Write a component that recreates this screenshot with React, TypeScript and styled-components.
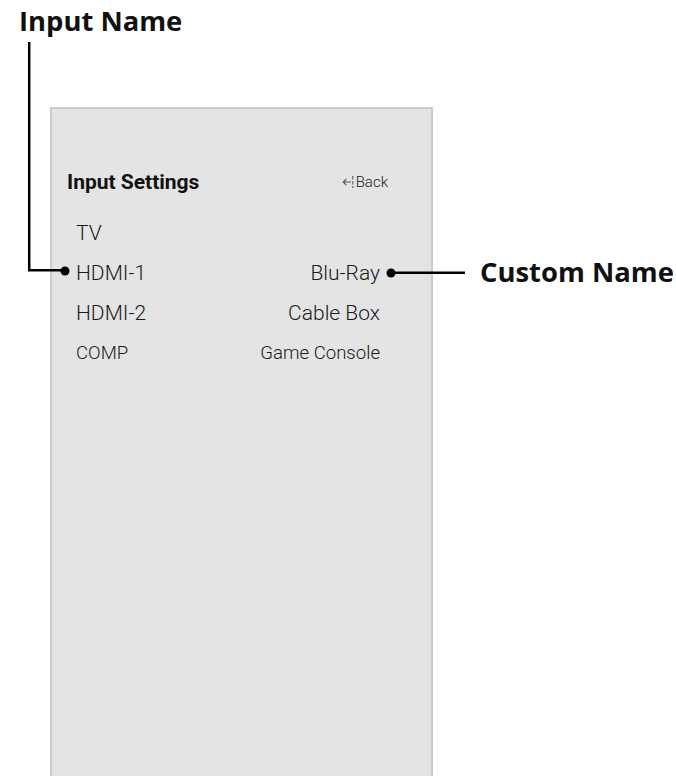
import React from "react";
import styled, { createGlobalStyle } from "styled-components";

const GlobalStyle = createGlobalStyle`
  html, body {
    margin: 0;
    padding: 0;
    background: #ffffff;
    overflow: hidden;
  }
`;

const Page = styled.div`
  padding-top: 2.5px;
  width: 676px;
  height: 776px;
  box-sizing: border-box;
  overflow: hidden;
`;

const Label = styled.h2`
  margin: 0 0 0 19px;
  font-family: "Open Sans", "Liberation Sans", sans-serif;
  font-weight: 700;
  font-size: 27.4px;
  line-height: 36px;
  color: #111;
  white-space: nowrap;
`;

const Panel = styled.div`
  margin: 68.5px 0 0 50px;
  width: 383px;
  height: 669px;
  box-sizing: border-box;
  border: 2px solid #cbcbcb;
  border-bottom: none;
  background: #e4e4e4;
  padding-top: 61px;
  font-family: Roboto, "Liberation Sans", sans-serif;
`;

const TitleRow = styled.div`
  display: flex;
  align-items: baseline;
  justify-content: space-between;
  padding: 0 43px 0 15px;
  margin-bottom: 18.7px;
`;

const Title = styled.span`
  font-weight: 700;
  font-size: 21px;
  line-height: 24px;
  color: #111;
`;

const BackLink = styled.span`
  display: inline-flex;
  align-items: center;
  gap: 1px;
  font-size: 15px;
  font-weight: 300;
  color: #222;
`;

const List = styled.ul`
  list-style: none;
  margin: 0;
  padding: 0 51px 0 24px;
`;

const Row = styled.li<{ small?: boolean }>`
  position: relative;
  display: flex;
  justify-content: space-between;
  height: 40px;
  line-height: 40px;
  font-size: ${(p) => (p.small ? "18.6px" : "21px")};
  font-weight: 300;
  color: #1a1a1a;
`;

const Cell = styled.span`
  position: relative;
  white-space: nowrap;
`;

const LeftCallout = styled.svg`
  position: absolute;
  left: -50px;
  top: -210.5px;
  overflow: visible;
`;

const RightCallout = styled.span`
  position: absolute;
  left: calc(100% + 6px);
  top: 0;
  height: 40px;
  display: flex;
  align-items: center;
  gap: 14px;
`;

const CalloutText = styled.span`
  font-family: "Open Sans", "Liberation Sans", sans-serif;
  font-weight: 700;
  font-size: 27.4px;
  line-height: 36px;
  color: #111;
  white-space: nowrap;
  margin-top: -2px;
`;

function BackArrow() {
  return (
    <svg width="13" height="14" viewBox="0 0 13 14">
      <path
        d="M9 7H1.2M4.4 3.8L1.2 7l3.2 3.2"
        stroke="#555"
        strokeWidth="1.1"
        fill="none"
      />
      <path
        d="M10.8 1v12"
        stroke="#555"
        strokeWidth="1"
        strokeDasharray="3.5 1.5"
      />
    </svg>
  );
}

const rows = [
  { input: "TV", name: "" },
  { input: "HDMI-1", name: "Blu-Ray", marked: true },
  { input: "HDMI-2", name: "Cable Box" },
  { input: "COMP", name: "Game Console", small: true },
];

export default function App() {
  return (
    <>
      <GlobalStyle />
      <Page>
        <Label>Input Name</Label>
        <Panel>
          <TitleRow>
            <Title>Input Settings</Title>
            <BackLink>
              <BackArrow />
              Back
            </BackLink>
          </TitleRow>
          <List>
            {rows.map((r) => (
              <Row key={r.input} small={r.small}>
                <Cell>
                  {r.marked && (
                    <LeftCallout width="46" height="234" viewBox="0 0 46 234">
                      <path
                        d="M3.2 0V228.2H39"
                        stroke="#000"
                        strokeWidth="2.5"
                        fill="none"
                      />
                      <circle cx="39" cy="229" r="4.5" fill="#000" />
                    </LeftCallout>
                  )}
                  {r.input}
                </Cell>
                <Cell>
                  {r.name}
                  {r.marked && (
                    <RightCallout>
                      <svg width="80" height="10" viewBox="0 0 80 10">
                        <circle cx="5" cy="5" r="4.5" fill="#000" />
                        <path d="M5 4.8H79" stroke="#000" strokeWidth="2.5" />
                      </svg>
                      <CalloutText>Custom Name</CalloutText>
                    </RightCallout>
                  )}
                </Cell>
              </Row>
            ))}
          </List>
        </Panel>
      </Page>
    </>
  );
}
